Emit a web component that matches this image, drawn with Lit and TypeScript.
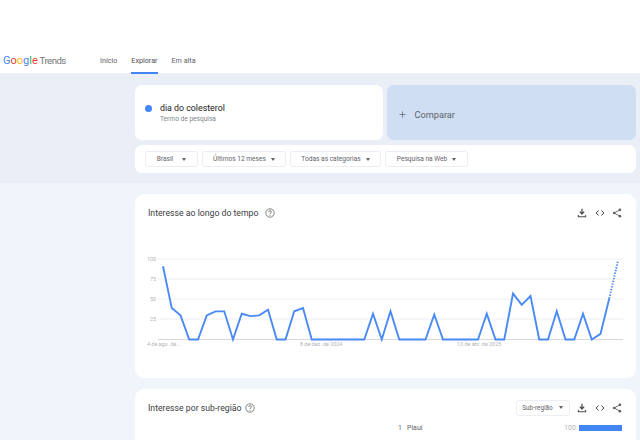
import { LitElement, html, css, svg } from "lit";
import { customElement } from "lit/decorators.js";

const VALUES = [91,39,30,0,0,30,35,35,0,32,29,30,37,0,0,35,39,0,0,0,0,0,0,0,32,0,35,0,0,0,0,31,0,0,0,0,0,32,0,0,57,43,54,0,0,35,0,0,32,0,7,51,98];
const px = (i: number) => 28 + i * 8.75;
const py = (v: number) => 145.5 - v * 0.805;
const solid = VALUES.slice(0, 52).map((v, i) => `${px(i)},${py(v)}`).join(" ");
const dotted = `${px(51)},${py(51)} ${px(52)},${py(98)}`;

const download = html`<svg class="icon" viewBox="0 0 12 12"><path d="M6 1v5.5M3.4 4.4 6 7.2l2.6-2.8" fill="none" stroke="#4a4e52" stroke-width="1.5"/><path d="M1.6 8.4v2h8.8v-2" fill="none" stroke="#4a4e52" stroke-width="1.3"/></svg>`;
const embed = html`<svg class="icon" viewBox="0 0 12 12"><path d="M4.2 3 1.4 6l2.8 3M7.8 3l2.8 3-2.8 3" fill="none" stroke="#3c4043" stroke-width="1.2"/></svg>`;
const share = html`<svg class="icon" viewBox="0 0 12 12"><path d="M9.5 2.2 2.6 6l6.9 3.8" fill="none" stroke="#5f6368" stroke-width="1.1"/><circle cx="9.5" cy="2.2" r="1.6" fill="#5f6368"/><circle cx="2.6" cy="6" r="1.6" fill="#5f6368"/><circle cx="9.5" cy="9.8" r="1.6" fill="#5f6368"/></svg>`;
const help = html`<svg class="help" viewBox="0 0 10 10"><circle cx="5" cy="5" r="4.2" fill="none" stroke="#5f6368" stroke-width=".8"/><path d="M3.7 3.9c0-1.7 2.7-1.7 2.7 0 0 1-1.4 1-1.4 2.2" fill="none" stroke="#5f6368" stroke-width=".8"/><circle cx="5" cy="7.4" r=".5" fill="#5f6368"/></svg>`;

@customElement("app-root")
export class AppRoot extends LitElement {
  static styles = css`
    :host { display: block; width: 640px; height: 440px; overflow: hidden; background: #f0f4fb; font-family: Roboto, "Noto Sans", sans-serif; color: #3c4043; }
    header { height: 74px; box-sizing: border-box; background: #fff; border-bottom: 1px solid #eceff4; padding-top: 48px; display: flex; align-items: flex-start; }
    .logo { font-size: 11px; line-height: 25px; width: 100px; padding-left: 3px; box-sizing: border-box; white-space: nowrap; color: #757575; font-family: "Roboto", sans-serif; }
    .logo b { font-weight: 400; }
    .logo .t { font-size: 9.6px; letter-spacing: -0.5px; margin-left: -1px; }
    .g { color: #4285f4; } .r { color: #ea4335; } .y { color: #fbbc05; } .gr { color: #34a853; }
    nav { display: flex; gap: 14px; font-size: 7.2px; color: #5f6368; }
    nav a { height: 26px; line-height: 25px; box-sizing: border-box; }
    nav a.on { color: #4a4f55; border-bottom: 2px solid #4285f4; }
    .band { height: 109px; box-sizing: border-box; background: #e9eef7; padding: 11px 4px 0 135px; display: flex; flex-direction: column; gap: 5px; }
    .terms { display: flex; gap: 4px; height: 55px; }
    .term { flex: 1; border-radius: 7px; background: #fff; display: flex; align-items: flex-start; gap: 8px; padding: 18px 0 0 10px; box-sizing: border-box; }
    .dot { width: 7px; height: 7px; border-radius: 50%; background: #4285f4; margin-top: 2px; }
    .term .name { font-size: 8.8px; color: #202124; line-height: 11px; }
    .term .sub { font-size: 6.6px; color: #80868b; line-height: 9px; margin-top: 1px; }
    .compare { background: #d0def4; align-items: center; padding: 3px 0 0 12px; gap: 9px; font-size: 9.2px; color: #5f6368; }
    .compare svg { width: 7px; height: 7px; }
    .filters { height: 28px; border-radius: 7px; background: #fff; display: flex; align-items: center; gap: 4px; padding-left: 10px; }
    .pill { height: 16px; box-sizing: border-box; border: 1px solid #eceef1; border-radius: 3px; display: flex; align-items: center; justify-content: center; gap: 5px; font-size: 6.6px; color: #5f6368; white-space: nowrap; }
    .caret { width: 0; height: 0; border: 2.5px solid transparent; border-top: 3px solid #5f6368; border-bottom: 0; }
    .card { background: #fff; border-radius: 9px; margin: 0 4px 0 135px; box-sizing: border-box; }
    .c1 { margin-top: 11px; height: 184px; position: relative; }
    .c2 { margin-top: 11px; height: 80px; padding: 0 14px 0 13px; }
    .head { display: flex; align-items: center; height: 37px; padding: 0 14px 0 13px; position: relative; }
    .c2 .head { padding: 0; }
    h2 { margin: 0; font-size: 8.7px; font-weight: 400; color: #3c4043; line-height: 12px; }
    .help { width: 10px; height: 10px; margin-left: 7px; }
    .c2 .help { margin-left: 4px; }
    .tools { margin-left: auto; display: flex; align-items: center; gap: 7.5px; }
    .icon { width: 10px; height: 10px; }
    .sel { width: 54px; height: 16px; gap: 6px; font-size: 6.4px; }
    .chart { display: block; width: 501px; height: 160px; position: absolute; left: 0; top: 0; }
    .chart text { font-family: Roboto, sans-serif; font-size: 5.4px; fill: #b0b4b8; }
    .rowline { display: flex; align-items: center; font-size: 7px; color: #5f6368; padding-left: 250px; margin-top: -3px; height: 9px; }
    .rowline .n { width: 9px; }
    .rowline .v { margin-left: auto; color: #b0b4b8; margin-right: 3px; }
    .rowline .bar { width: 43px; height: 6px; background: #4285f4; }
  `;

  render() {
    return html`
      <header>
        <div class="logo"><b class="g">G</b><b class="r">o</b><b class="y">o</b><b class="g">g</b><b class="gr">l</b><b class="r">e</b> <span class="t">Trends</span></div>
        <nav><a>Início</a><a class="on">Explorar</a><a>Em alta</a></nav>
      </header>
      <section class="band">
        <div class="terms">
          <div class="term">
            <span class="dot"></span>
            <div><div class="name">dia do colesterol</div><div class="sub">Termo de pesquisa</div></div>
          </div>
          <div class="term compare">
            <svg viewBox="0 0 8 8"><path d="M4 .5v7M.5 4h7" stroke="#5f6368" stroke-width=".8"/></svg>
            Comparar
          </div>
        </div>
        <div class="filters">
          <div class="pill" style="width:53px">Brasil <i class="caret" style="margin-left:4px"></i></div>
          <div class="pill" style="width:84px">Últimos 12 meses <i class="caret"></i></div>
          <div class="pill" style="width:91px">Todas as categorias <i class="caret"></i></div>
          <div class="pill" style="width:83px">Pesquisa na Web <i class="caret"></i></div>
        </div>
      </section>
      <section class="card c1">
        <svg class="chart" viewBox="0 0 501 160">
          ${[65, 85, 105, 125].map((y) => svg`<line x1="23" x2="488" y1=${y} y2=${y} stroke="#eeeff1" stroke-width="1"/>`)}
          <line x1="23" x2="488" y1="145.5" y2="145.5" stroke="#d5d7da" stroke-width="1"/>
          ${[["100", 67], ["75", 87], ["50", 107], ["25", 127]].map(([t, y]) => svg`<text x="21" y=${y} text-anchor="end">${t}</text>`)}
          <text x="12" y="151.5">4 de ago. de...</text>
          <text x="165" y="151.5">8 de dez. de 2024</text>
          <text x="322" y="151.5">13 de abr. de 2025</text>
          <polyline points=${solid} fill="none" stroke="#4a8af4" stroke-width="1.9" stroke-linejoin="miter"/>
          <polyline points=${dotted} fill="none" stroke="#4a8af4" stroke-width="1.9" stroke-dasharray="1.4 1.4"/>
        </svg>
        <div class="head">
          <h2>Interesse ao longo do tempo</h2>${help}
          <div class="tools">${download}${embed}${share}</div>
        </div>
      </section>
      <section class="card c2">
        <div class="head">
          <h2>Interesse por sub-região</h2>${help}
          <div class="tools"><div class="pill sel">Sub-região <i class="caret"></i></div>${download}${embed}${share}</div>
        </div>
        <div class="rowline"><span class="n">1</span><span>Piauí</span><span class="v">100</span><span class="bar"></span></div>
      </section>
    `;
  }
}
